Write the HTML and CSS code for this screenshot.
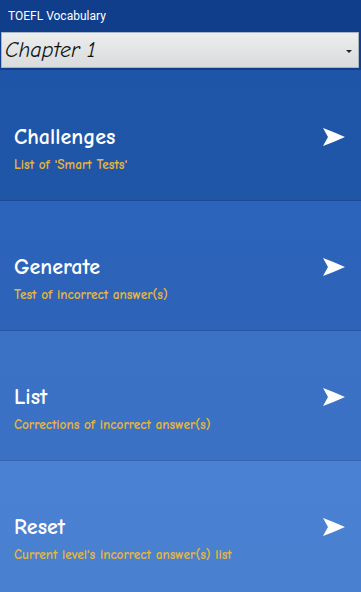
FILE: index.html
```html
<!DOCTYPE html>
<html>
<head>
<meta charset="utf-8">
<link rel="stylesheet" href="styles.css">
</head>
<body>
<div class="app">
  <header class="topbar">
    <div class="apptitle">TOEFL Vocabulary</div>
    <div class="spinner">
      <span class="spinner-text">Chapter 1</span>
      <span class="spinner-caret"></span>
    </div>
  </header>
  <main class="menu">
    <div class="item item1">
      <div class="texts">
        <div class="title">Challenges</div>
        <div class="sub">List of 'Smart Tests'</div>
      </div>
      <svg class="arrow" viewBox="0 0 22 18" width="22" height="18"><path d="M0 0 Q11 4 22 9 Q11 14 0 18 L5 9 Z" fill="#fff"/></svg>
    </div>
    <div class="item item2">
      <div class="texts">
        <div class="title">Generate</div>
        <div class="sub">Test of incorrect answer(s)</div>
      </div>
      <svg class="arrow" viewBox="0 0 22 18" width="22" height="18"><path d="M0 0 Q11 4 22 9 Q11 14 0 18 L5 9 Z" fill="#fff"/></svg>
    </div>
    <div class="item item3">
      <div class="texts">
        <div class="title">List</div>
        <div class="sub">Corrections of incorrect answer(s)</div>
      </div>
      <svg class="arrow" viewBox="0 0 22 18" width="22" height="18"><path d="M0 0 Q11 4 22 9 Q11 14 0 18 L5 9 Z" fill="#fff"/></svg>
    </div>
    <div class="item item4">
      <div class="texts">
        <div class="title">Reset</div>
        <div class="sub">Current level's incorrect answer(s) list</div>
      </div>
      <svg class="arrow" viewBox="0 0 22 18" width="22" height="18"><path d="M0 0 Q11 4 22 9 Q11 14 0 18 L5 9 Z" fill="#fff"/></svg>
    </div>
  </main>
</div>
</body>
</html>
```
FILE: styles.css
```css
html, body {
  margin: 0;
  padding: 0;
}
body {
  width: 361px;
  height: 592px;
  overflow: hidden;
  background: #4a80d0;
  font-family: "Comic Sans MS", "Comic Neue", cursive;
}
.app {
  display: flex;
  flex-direction: column;
  height: 592px;
}
.topbar {
  background: #113e8b;
  height: 70px;
  display: flex;
  flex-direction: column;
}
.apptitle {
  font-family: Roboto, "Liberation Sans", sans-serif;
  color: #ffffff;
  font-size: 12px;
  height: 32px;
  line-height: 32px;
  padding-left: 8px;
}
.spinner {
  margin: 0 2px 0 1px;
  height: 36px;
  background: linear-gradient(#eceeee, #d9dbdc);
  border: 1px solid #a9b4c4;
  box-sizing: border-box;
  display: flex;
  align-items: center;
  justify-content: space-between;
  padding: 0 6px 0 3px;
}
.spinner-text {
  font-size: 22px;
  font-style: italic;
  color: #111;
}
.spinner-caret {
  width: 0;
  height: 0;
  border-left: 3px solid transparent;
  border-right: 3px solid transparent;
  border-top: 3px solid #222;
  margin-top: 2px;
}
.menu {
  flex: 1;
  display: flex;
  flex-direction: column;
}
.item {
  height: 130px;
  display: flex;
  align-items: flex-start;
  justify-content: space-between;
  box-sizing: border-box;
  padding: 52px 16px 0 14px;
  border-bottom: 1px solid rgba(0, 0, 0, 0.12);
}
.item1 {
  height: 131px;
  padding-top: 53px;
  background: linear-gradient(#1e55a8, #2056a6);
}
.item2 {
  background: linear-gradient(#2c63bb, #2d64b9);
}
.item3 {
  background: linear-gradient(#3b72c6, #3b71c4);
}
.item4 {
  background: linear-gradient(#4a81d2, #4a80d0);
  border-bottom: none;
}
.texts {
  display: flex;
  flex-direction: column;
}
.title {
  color: #ffffff;
  font-size: 22px;
  font-weight: bold;
  line-height: 28px;
}
.sub {
  color: #e6b63a;
  font-size: 13.3px;
  font-weight: bold;
  line-height: 16px;
  margin-top: 6px;
}
.arrow {
  margin-top: 5px;
}
```
